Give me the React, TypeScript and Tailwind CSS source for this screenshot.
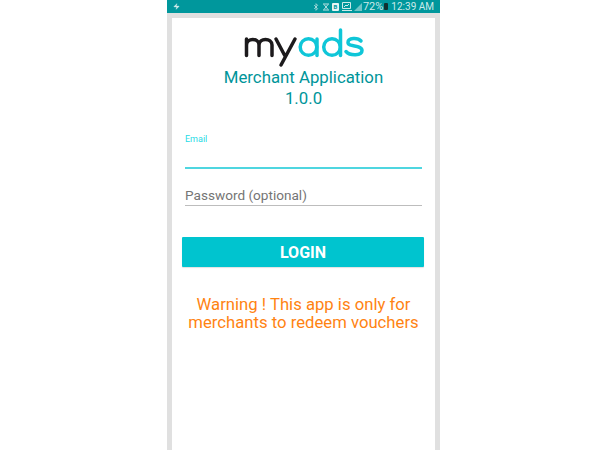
import React from 'react';
import { Bluetooth, Zap } from 'lucide-react';

function StatusBar() {
  return (
    <div className="flex h-[13px] items-center justify-between bg-[#00979c] pl-[6px] pr-[6px] text-[#cdeaea]">
      <Zap className="h-[7px] w-[7px]" fill="currentColor" strokeWidth={1} />
      <div className="flex items-center text-[10px] leading-none">
        <Bluetooth className="h-[8px] w-[8px]" strokeWidth={2} />
        <svg className="ml-[2px] h-[8px] w-[8px]" viewBox="0 0 8 8">
          <path d="M1 1h6M1 7h6M2 1.500l4 5M6 1.500l-4 5" fill="none" stroke="currentColor" strokeWidth="0.900" />
        </svg>
        <span className="ml-[2px] flex h-[8px] w-[7px] items-center justify-center rounded-[1px] bg-[#e4f4f4] text-[6px] font-bold text-[#00979c]">
          B
        </span>
        <svg className="ml-[3px] h-[9px] w-[10px]" viewBox="0 0 10 9">
          <path d="M.5.5h8v6h-8zM2 5l2-2 1 1 2-2" fill="none" stroke="currentColor" strokeWidth="1" />
          <path d="M0 8.500h10" stroke="currentColor" strokeWidth="1" />
        </svg>
        <svg className="ml-[2px] h-[8px] w-[8px]" viewBox="0 0 8 8">
          <path d="M0 8L8 0v8z" fill="#6fc4c6" />
        </svg>
        <span className="ml-[1px] text-[11px]">72%</span>
        <span className="ml-[1px] h-[7px] w-[4px] rounded-[1px] bg-[#10302f]" />
        <span className="ml-[3px]">12:39 AM</span>
      </div>
    </div>
  );
}

function Logo() {
  return (
    <svg className="mx-auto block h-[40px] w-[122px]" viewBox="0 0 122 40" fill="none" strokeWidth="3.500" strokeLinecap="round">
      <g stroke="#1c1a1c">
        <path d="M3.500 27.500V11M3.500 17c0-7.500 12.500-7.500 12.500 0v10.500M16 17c0-7.500 13-7.500 13 0v10.500" />
        <path d="M33 11l9 17M52 11L38 37" />
      </g>
      <g stroke="#0fc6d8">
        <circle cx="65.500" cy="19" r="8.300" />
        <path d="M74 11v16.500" />
        <circle cx="89" cy="19" r="8.300" />
        <path d="M97.500 2v25.500" />
        <path d="M118 13c-3-3.500-13-3.500-13 1.500 0 5 14 2 14 8 0 5.500-12 5.500-16 1" />
      </g>
    </svg>
  );
}

export default function App() {
  return (
    <div className="h-[450px] w-[600px] overflow-hidden bg-white font-['Roboto',sans-serif]">
      <div className="ml-[167px] h-full w-[273px] bg-[#e0e0e0]">
        <StatusBar />
        <div className="mx-[5px] mt-[5px] h-[432px] bg-white px-[10px]">
          <div className="pt-[10px]">
            <Logo />
          </div>
          <div className="-mt-[1px] text-center text-[16.800px] leading-[21px] text-[#00959a]">
            <p>Merchant Application</p>
            <p>1.0.0</p>
          </div>

          <div className="mx-[3px] mt-[25px]">
            <p className="text-[9px] leading-[10px] text-[#28dbe6]">Email</p>
            <div className="h-[25px] border-b-2 border-[#4fd6e0]" />
          </div>
          <div className="mx-[3px] mt-[17px] h-[20px] border-b border-[#bdbdbd] text-[13.600px] leading-[19px] text-[#757575]">
            Password (optional)
          </div>

          <button className="mt-[31px] block h-[30px] w-[242px] rounded-[1px] bg-[#00c4cf] pt-[1px] text-[16px] font-bold text-white shadow-[0_1px_1px_rgba(0,0,0,0.12)]">
            LOGIN
          </button>

          <p className="mt-[29px] text-center text-[16.700px] leading-[18px] text-[#ff8312]">
            Warning ! This app is only for
            <br />
            merchants to redeem vouchers
          </p>
        </div>
      </div>
    </div>
  );
}
